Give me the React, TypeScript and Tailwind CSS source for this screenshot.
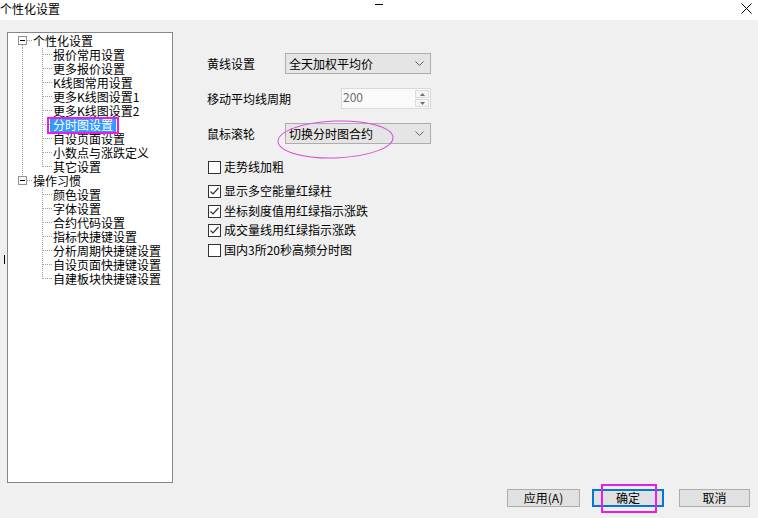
import React from "react";

const DOT = "#a0a0a0";

function TopRow({ label, first }: { label: string; first: boolean }) {
  return (
    <div className="flex h-[14px] items-center">
      <svg width="25" height="14" className="shrink-0" shapeRendering="crispEdges">
        {first ? (
          <line x1="14.5" y1="11" x2="14.5" y2="14" stroke={DOT} strokeDasharray="1 1" />
        ) : (
          <line x1="14.5" y1="0" x2="14.5" y2="3" stroke={DOT} strokeDasharray="1 1" />
        )}
        <rect x="10.5" y="2.5" width="8" height="8" fill="white" stroke="#919191" />
        <line x1="12" y1="6.5" x2="17" y2="6.5" stroke="#000" />
        <line x1="19" y1="6.5" x2="24" y2="6.5" stroke={DOT} strokeDasharray="1 1" />
      </svg>
      <span className="leading-[14px]">{label}</span>
    </div>
  );
}

function ChildRow({
  label,
  trunk,
  last,
  selected,
}: {
  label: string;
  trunk: boolean;
  last: boolean;
  selected?: boolean;
}) {
  return (
    <div className="flex h-[14px] items-center">
      <svg width="45" height="14" className="shrink-0" shapeRendering="crispEdges">
        {trunk && <line x1="14.5" y1="0" x2="14.5" y2="14" stroke={DOT} strokeDasharray="1 1" />}
        <line x1="34.5" y1="0" x2="34.5" y2={last ? 7 : 14} stroke={DOT} strokeDasharray="1 1" />
        <line x1="35" y1="6.5" x2="44" y2="6.5" stroke={DOT} strokeDasharray="1 1" />
      </svg>
      {selected ? (
        <span className="relative inline-block h-[14px] leading-[14px] -ml-[3px] px-[3px] bg-[#3399ff] text-white">
          {label}
          <span className="absolute -left-[3px] -top-[1px] -right-[3px] -bottom-[2px] border-2 border-[#e81ee8]" />
        </span>
      ) : (
        <span className="leading-[14px]">{label}</span>
      )}
    </div>
  );
}

function Chevron() {
  return (
    <svg width="9" height="5" className="shrink-0">
      <polyline points="0.5,0.5 4.5,4.5 8.5,0.5" fill="none" stroke="#606060" strokeWidth="1" />
    </svg>
  );
}

function Combo({ text, children }: { text: string; children?: React.ReactNode }) {
  return (
    <div className="relative w-[146px] h-[21px] border border-[#adadad] bg-[#e5e5e5] flex items-center pl-[3px] pr-[6px]">
      <span className="flex-1 leading-[14px]">{text}</span>
      <Chevron />
      {children}
    </div>
  );
}

function Check({ checked, label }: { checked: boolean; label: string }) {
  return (
    <div className="flex h-[14px] items-center">
      <div className="ml-[1px] w-[13px] h-[13px] border border-[#333333] bg-white flex items-center justify-center shrink-0">
        {checked && (
          <svg width="11" height="11">
            <polyline points="1.5,5.5 4,8 9.5,2" fill="none" stroke="#333333" strokeWidth="1.2" />
          </svg>
        )}
      </div>
      <span className="ml-[3px] leading-[14px]">{label}</span>
    </div>
  );
}

export default function App() {
  const g1 = [
    "报价常用设置",
    "更多报价设置",
    "K线图常用设置",
    "更多K线图设置1",
    "更多K线图设置2",
    "分时图设置",
    "自设页面设置",
    "小数点与涨跌定义",
    "其它设置",
  ];
  const g2 = [
    "颜色设置",
    "字体设置",
    "合约代码设置",
    "指标快捷键设置",
    "分析周期快捷键设置",
    "自设页面快捷键设置",
    "自建板块快捷键设置",
  ];
  return (
    <div className="w-[758px] h-[518px] overflow-hidden bg-[#f0f0f0] flex flex-col text-[12px] text-black font-['Noto_Sans_CJK_SC','Noto_Sans',sans-serif]">
      {/* title bar */}
      <div className="h-[20px] bg-white flex items-center shrink-0">
        <span className="leading-[14px] -mt-[3px]">个性化设置</span>
        <div className="ml-[315px] -mt-[12px] w-[8px] h-[1px] bg-black" />
        <div className="ml-auto mr-[6px] -mt-[3px]">
          <svg width="11" height="11">
            <line x1="0.5" y1="0.5" x2="10.5" y2="10.5" stroke="#000" />
            <line x1="10.5" y1="0.5" x2="0.5" y2="10.5" stroke="#000" />
          </svg>
        </div>
      </div>

      <div className="relative flex-1 flex flex-col">
        <div className="absolute left-[4px] top-[235px] w-[1px] h-[9px] bg-black" />
        <div className="flex">
          {/* tree */}
          <div className="ml-[7px] mt-[12px] w-[166px] h-[451px] border border-[#828790] bg-white pt-[1px]">
            <TopRow label="个性化设置" first />
            {g1.map((t, i) => (
              <ChildRow key={t} label={t} trunk last={i === g1.length - 1} selected={t === "分时图设置"} />
            ))}
            <TopRow label="操作习惯" first={false} />
            {g2.map((t, i) => (
              <ChildRow key={t} label={t} trunk={false} last={i === g2.length - 1} />
            ))}
          </div>

          {/* form */}
          <div className="ml-[34px] pt-[33px] flex flex-col">
            <div className="flex items-center h-[21px]">
              <span className="w-[78px] leading-[14px]">黄线设置</span>
              <Combo text="全天加权平均价" />
            </div>
            <div className="flex items-center h-[21px] mt-[14px]">
              <span className="w-[134px] leading-[14px]">移动平均线周期</span>
              <div className="w-[90px] h-[21px] border border-[#d9d9d9] bg-[#fafafa] flex">
                <span className="flex-1 pl-[1px] pt-[1px] leading-[14px] text-[#6d6d6d]">200</span>
                <div className="w-[16px] flex flex-col p-[1px] gap-[1px]">
                  <div className="flex-1 border border-[#dcdcdc] bg-[#f4f4f4] flex items-center justify-center">
                    <svg width="5" height="3">
                      <polygon points="2.5,0 5,3 0,3" fill="#6d6d6d" />
                    </svg>
                  </div>
                  <div className="flex-1 border border-[#dcdcdc] bg-[#f4f4f4] flex items-center justify-center">
                    <svg width="5" height="3">
                      <polygon points="0,0 5,0 2.5,3" fill="#6d6d6d" />
                    </svg>
                  </div>
                </div>
              </div>
            </div>
            <div className="flex items-center h-[21px] mt-[14px]">
              <span className="w-[78px] leading-[14px]">鼠标滚轮</span>
              <Combo text="切换分时图合约">
                <svg
                  width="119"
                  height="41"
                  className="absolute -left-[10px] -top-[5px] pointer-events-none"
                >
                  <ellipse
                    cx="59.5"
                    cy="20.5"
                    rx="57.5"
                    ry="18.5"
                    fill="none"
                    stroke="#d64bd6"
                    strokeWidth="1"
                    transform="rotate(-2 59.5 20.5)"
                  />
                </svg>
              </Combo>
            </div>
            <div className="mt-[16px]">
              <Check checked={false} label="走势线加粗" />
            </div>
            <div className="mt-[10px]">
              <Check checked label="显示多空能量红绿柱" />
            </div>
            <div className="mt-[6px]">
              <Check checked label="坐标刻度值用红绿指示涨跌" />
            </div>
            <div className="mt-[5px]">
              <Check checked label="成交量线用红绿指示涨跌" />
            </div>
            <div className="mt-[6px]">
              <Check checked={false} label="国内3所20秒高频分时图" />
            </div>
          </div>
        </div>

        {/* buttons */}
        <div className="flex justify-end mt-[6px] pr-[8px]">
          <div className="w-[73px] h-[18px] border border-[#adadad] bg-[#e1e1e1] flex items-center justify-center leading-[14px]">
            应用(A)
          </div>
          <div className="relative ml-[12px] w-[72px] h-[18px] border-2 border-[#0078d7] bg-[#e1e1e1] flex items-center justify-center leading-[14px]">
            确定
            <span className="absolute left-[7px] -top-[7px] w-[56px] h-[29px] border-2 border-[#e81ee8]" />
          </div>
          <div className="ml-[15px] w-[71px] h-[18px] border border-[#adadad] bg-[#e1e1e1] flex items-center justify-center leading-[14px]">
            取消
          </div>
        </div>
      </div>
    </div>
  );
}
